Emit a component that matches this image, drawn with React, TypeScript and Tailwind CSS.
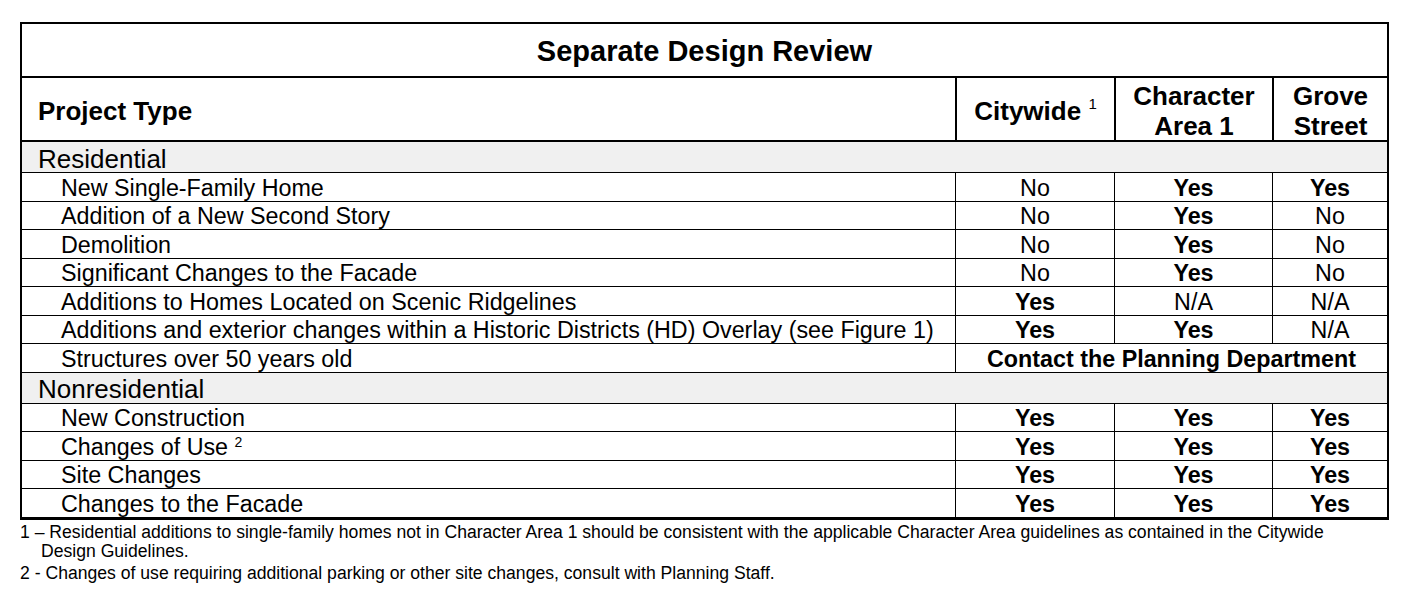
import React from 'react';

type Row = {
  label: React.ReactNode;
  cells?: [string, string, string];
  span?: string;
};

const residential: Row[] = [
  { label: 'New Single-Family Home', cells: ['No', 'Yes', 'Yes'] },
  { label: 'Addition of a New Second Story', cells: ['No', 'Yes', 'No'] },
  { label: 'Demolition', cells: ['No', 'Yes', 'No'] },
  { label: 'Significant Changes to the Facade', cells: ['No', 'Yes', 'No'] },
  { label: 'Additions to Homes Located on Scenic Ridgelines', cells: ['Yes', 'N/A', 'N/A'] },
  {
    label: 'Additions and exterior changes within a Historic Districts (HD) Overlay (see Figure 1)',
    cells: ['Yes', 'Yes', 'N/A'],
  },
  { label: 'Structures over 50 years old', span: 'Contact the Planning Department' },
];

const nonresidential: Row[] = [
  { label: 'New Construction', cells: ['Yes', 'Yes', 'Yes'] },
  {
    label: (
      <span>
        Changes of Use <sup className="text-[14px] relative -top-[8px]">2</sup>
      </span>
    ),
    cells: ['Yes', 'Yes', 'Yes'],
  },
  { label: 'Site Changes', cells: ['Yes', 'Yes', 'Yes'] },
  { label: 'Changes to the Facade', cells: ['Yes', 'Yes', 'Yes'] },
];

const Cell: React.FC<{ value: string }> = ({ value }) => (
  <div
    className={`border-l border-black flex items-center justify-center pt-[3px] ${
      value === 'Yes' ? 'font-bold' : ''
    }`}
  >
    {value}
  </div>
);

const DataRow: React.FC<{ row: Row }> = ({ row }) => (
  <div className="grid grid-cols-[933px_159px_158px_1fr] h-[28.5px] border-b border-black text-[23.3px] leading-none">
    <div className="flex items-center pl-[39px] pt-[3px] whitespace-nowrap">{row.label}</div>
    {row.cells ? (
      row.cells.map((c, i) => <Cell key={i} value={c} />)
    ) : (
      <div className="col-span-3 border-l border-black flex items-center justify-center pt-[3px] font-bold">
        {row.span}
      </div>
    )}
  </div>
);

const SectionRow: React.FC<{ title: string }> = ({ title }) => (
  <div className="h-[31px] bg-[#f0f0f0] border-b border-black flex items-center pl-[16px] pt-[3px] text-[26px] leading-none">
    {title}
  </div>
);

export default function App() {
  return (
    <div className="w-[1409px] h-[590px] bg-white text-black font-['Liberation_Sans',Arial,sans-serif] pt-[22px] pl-[20px]">
      <div className="w-[1369px] border-2 border-black">
        {/* Title */}
        <div className="h-[54px] border-b-2 border-black flex items-center justify-center pt-[3px] text-[29px] font-bold">
          Separate Design Review
        </div>

        {/* Header */}
        <div className="grid grid-cols-[933px_159px_158px_1fr] h-[64px] border-b-2 border-black text-[26px] font-bold leading-[30px]">
          <div className="flex items-center pl-[16px] pt-[3px]">Project Type</div>
          <div className="border-l-2 border-black flex items-center justify-center pt-[3px]">
            <span>
              Citywide <sup className="text-[15px] font-normal relative -top-[11px]">1</sup>
            </span>
          </div>
          <div className="border-l-2 border-black flex items-center justify-center text-center pt-[3px]">
            Character
            <br />
            Area 1
          </div>
          <div className="border-l-2 border-black flex items-center justify-center text-center pt-[3px]">
            Grove
            <br />
            Street
          </div>
        </div>

        <SectionRow title="Residential" />
        {residential.map((r, i) => (
          <DataRow key={i} row={r} />
        ))}
        <SectionRow title="Nonresidential" />
        {nonresidential.map((r, i) => (
          <DataRow key={i} row={r} />
        ))}
      </div>

      {/* Footnotes */}
      <div className="text-[17.6px] leading-[19px] mt-[3px]">
        <p className="pl-[21px] -indent-[21px]">
          1 – Residential additions to single-family homes not in Character Area 1 should be consistent with the
          applicable Character Area guidelines as contained in the Citywide
          <br />
          Design Guidelines.
        </p>
        <p className="mt-[3px]">
          2 - Changes of use requiring additional parking or other site changes, consult with Planning Staff.
        </p>
      </div>
    </div>
  );
}
